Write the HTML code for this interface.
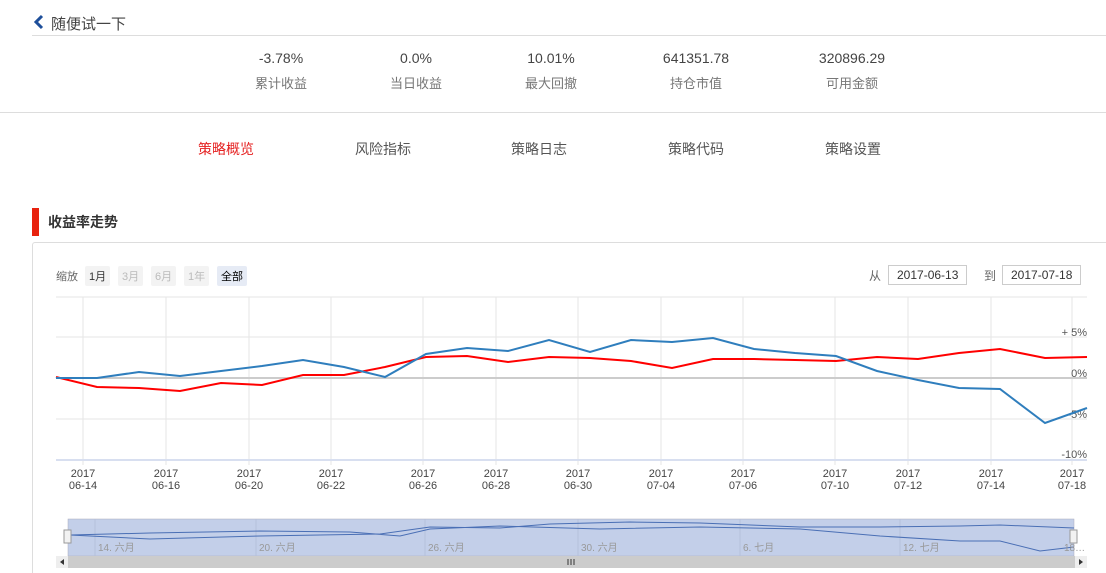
<!DOCTYPE html><html style="height:573px;overflow:hidden"><head><meta charset="utf-8"><style>
body{margin:0;width:1106px;height:573px;overflow:hidden;background:#fff;font-family:"Liberation Sans","Noto Sans CJK SC",sans-serif;position:relative}
.a{position:absolute;white-space:nowrap}
.st{width:120px;text-align:center}
.v{font-size:14px;color:#444}
.l{font-size:13px;color:#777}
.tab{font-size:14px;color:#555}
.btn{font-size:11px;padding:2px 4px;border-radius:2px;background:#f3f3f3;color:#bbb}
.inp{border:1px solid #ccc;font-size:12px;color:#333;height:18px;line-height:18px;padding:0 8px}
</style></head><body>
<svg class="a" style="left:32px;top:14px" width="14" height="16"><path d="M10 2 L4 8 L10 14" stroke="#1e4f9a" stroke-width="3" fill="none"/></svg>
<div class="a" style="left:51px;top:13px;font-size:15px;color:#444">随便试一下</div>
<div class="a" style="left:32px;top:35px;width:1074px;height:1px;background:#ddd"></div>
<div class="a st v" style="left:221px;top:50px">-3.78%</div><div class="a st l" style="left:221px;top:73px">累计收益</div>
<div class="a st v" style="left:356px;top:50px">0.0%</div><div class="a st l" style="left:356px;top:73px">当日收益</div>
<div class="a st v" style="left:491px;top:50px">10.01%</div><div class="a st l" style="left:491px;top:73px">最大回撤</div>
<div class="a st v" style="left:636px;top:50px">641351.78</div><div class="a st l" style="left:636px;top:73px">持仓市值</div>
<div class="a st v" style="left:792px;top:50px">320896.29</div><div class="a st l" style="left:792px;top:73px">可用金额</div>
<div class="a" style="left:0;top:112px;width:1106px;height:1px;background:#ddd"></div>
<div class="a tab" style="left:198px;top:139px;color:#e52222">策略概览</div>
<div class="a tab" style="left:355px;top:139px">风险指标</div>
<div class="a tab" style="left:511px;top:139px">策略日志</div>
<div class="a tab" style="left:668px;top:139px">策略代码</div>
<div class="a tab" style="left:825px;top:139px">策略设置</div>
<div class="a" style="left:32px;top:208px;width:7px;height:28px;background:#e8220e"></div>
<div class="a" style="left:48px;top:212px;font-size:14px;font-weight:bold;color:#333">收益率走势</div>
<div class="a" style="left:32px;top:242px;width:1080px;height:340px;border:1px solid #ddd;border-radius:3px"></div>
<div class="a" style="left:56px;top:268px;font-size:11px;color:#666">缩放</div>
<div class="a btn" style="left:85px;top:266px;color:#333">1月</div>
<div class="a btn" style="left:118px;top:266px">3月</div>
<div class="a btn" style="left:151px;top:266px">6月</div>
<div class="a btn" style="left:184px;top:266px">1年</div>
<div class="a btn" style="left:217px;top:266px;background:#e6ebf5;color:#000">全部</div>
<div class="a" style="left:869px;top:267px;font-size:12px;color:#666">从</div>
<div class="a inp" style="left:888px;top:265px">2017-06-13</div>
<div class="a" style="left:984px;top:267px;font-size:12px;color:#666">到</div>
<div class="a inp" style="left:1002px;top:265px">2017-07-18</div>
<svg class="a" style="left:0;top:0" width="1106" height="573" font-family="Liberation Sans" font-size="11" fill="#555">
<g stroke="#e6e6e6" stroke-width="1">
<line x1="56" y1="297" x2="1087" y2="297"/><line x1="56" y1="337" x2="1087" y2="337"/><line x1="56" y1="419" x2="1087" y2="419"/>
<line x1="83" y1="297" x2="83" y2="465"/><line x1="166" y1="297" x2="166" y2="465"/><line x1="249" y1="297" x2="249" y2="465"/><line x1="331" y1="297" x2="331" y2="465"/><line x1="423" y1="297" x2="423" y2="465"/><line x1="496" y1="297" x2="496" y2="465"/><line x1="578" y1="297" x2="578" y2="465"/><line x1="661" y1="297" x2="661" y2="465"/><line x1="743" y1="297" x2="743" y2="465"/><line x1="835" y1="297" x2="835" y2="465"/><line x1="908" y1="297" x2="908" y2="465"/><line x1="991" y1="297" x2="991" y2="465"/><line x1="1072" y1="297" x2="1072" y2="465"/>
</g>
<line x1="56" y1="378" x2="1087" y2="378" stroke="#ccc" stroke-width="2"/>
<line x1="56" y1="460" x2="1087" y2="460" stroke="#d8dff0" stroke-width="2"/>
<g text-anchor="end"><text x="1087" y="336">+ 5%</text><text x="1087" y="377">0%</text><text x="1087" y="418">-5%</text><text x="1087" y="458">-10%</text></g>
<polyline fill="none" stroke="#f00" stroke-width="2" points="56,377 97,387 139,388 180,391 221,383 262,385 303,375 344,375 385,367 426,357 467,356 508,362 549,357 590,358 631,361 672,368 713,359 754,359 795,360 836,361 877,357 918,359 959,353 1000,349 1045,358 1087,357"/>
<polyline fill="none" stroke="#2f7ebd" stroke-width="2" points="56,378 97,378 139,372 180,376 221,371 262,366 303,360 344,367 385,377 426,354 467,348 508,351 549,340 590,352 631,340 672,342 713,338 754,349 795,353 836,356 877,371 918,380 959,388 1000,389 1045,423 1087,408"/>
<g text-anchor="middle" fill="#444">
<text x="83" y="477">2017</text><text x="83" y="489">06-14</text>
<text x="166" y="477">2017</text><text x="166" y="489">06-16</text>
<text x="249" y="477">2017</text><text x="249" y="489">06-20</text>
<text x="331" y="477">2017</text><text x="331" y="489">06-22</text>
<text x="423" y="477">2017</text><text x="423" y="489">06-26</text>
<text x="496" y="477">2017</text><text x="496" y="489">06-28</text>
<text x="578" y="477">2017</text><text x="578" y="489">06-30</text>
<text x="661" y="477">2017</text><text x="661" y="489">07-04</text>
<text x="743" y="477">2017</text><text x="743" y="489">07-06</text>
<text x="835" y="477">2017</text><text x="835" y="489">07-10</text>
<text x="908" y="477">2017</text><text x="908" y="489">07-12</text>
<text x="991" y="477">2017</text><text x="991" y="489">07-14</text>
<text x="1072" y="477">2017</text><text x="1072" y="489">07-18</text>
</g>
<rect x="56" y="519" width="1031" height="37" fill="#fff"/>
<rect x="68" y="519" width="1006" height="37" fill="#c3cfe9" stroke="#aab" stroke-width="0.5"/>
<g stroke="#b5c0da"><line x1="95" y1="519" x2="95" y2="556"/><line x1="256" y1="519" x2="256" y2="556"/><line x1="425" y1="519" x2="425" y2="556"/><line x1="578" y1="519" x2="578" y2="556"/><line x1="740" y1="519" x2="740" y2="556"/><line x1="900" y1="519" x2="900" y2="556"/></g>
<polyline fill="none" stroke="#4a6fb5" stroke-width="1" points="70,535 150,539 260,536 380,534 430,527 500,528 550,524 630,522 700,523 800,527 880,527 960,526 1000,525 1074,528"/>
<polyline fill="none" stroke="#4a6fb5" stroke-width="1" points="70,535 150,533 260,531 350,532 400,536 430,529 500,526 600,529 700,527 800,529 880,536 960,541 1000,541 1040,551 1074,547"/>
<g fill="#999" font-size="10"><text x="98" y="551">14. 六月</text><text x="259" y="551">20. 六月</text><text x="428" y="551">26. 六月</text><text x="581" y="551">30. 六月</text><text x="743" y="551">6. 七月</text><text x="903" y="551">12. 七月</text><text x="1064" y="551">18…</text></g>
<rect x="64" y="530" width="7" height="13" fill="#f2f2f2" stroke="#999"/>
<rect x="1070" y="530" width="7" height="13" fill="#f2f2f2" stroke="#999"/>
<rect x="56" y="556" width="1031" height="12" fill="#ccc"/>
<rect x="56" y="556" width="12" height="12" fill="#eee"/><rect x="1075" y="556" width="12" height="12" fill="#eee"/>
<path d="M64 559 L60 562 L64 565Z" fill="#333"/><path d="M1079 559 L1083 562 L1079 565Z" fill="#333"/>
<g stroke="#333"><line x1="568" y1="559" x2="568" y2="565"/><line x1="571" y1="559" x2="571" y2="565"/><line x1="574" y1="559" x2="574" y2="565"/></g>
</svg>
</body></html>
